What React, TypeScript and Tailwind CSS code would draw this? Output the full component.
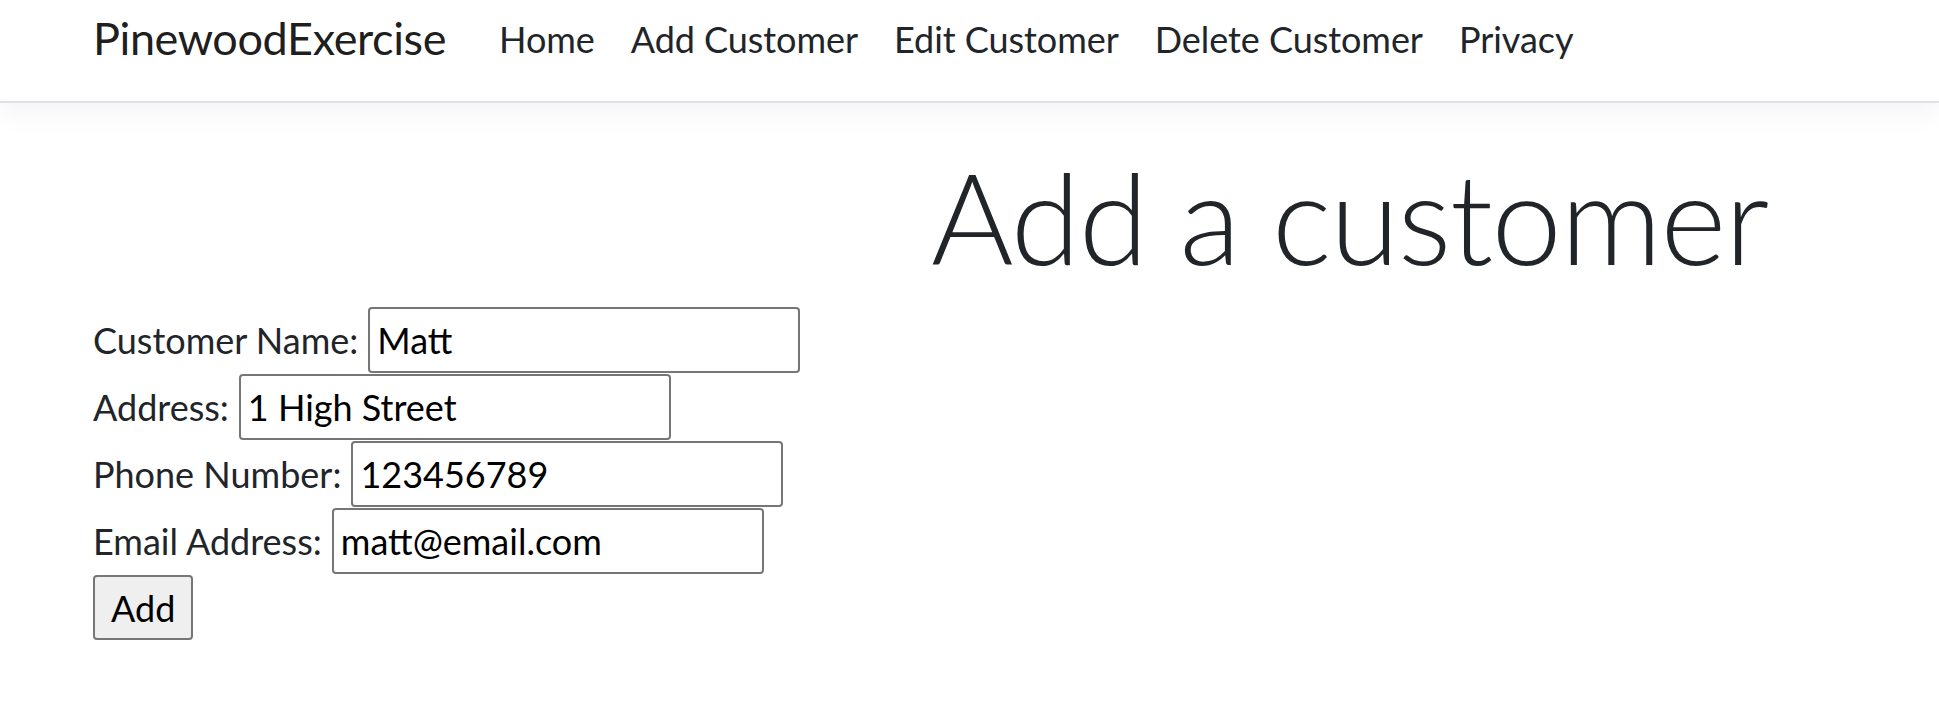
const navLinks = ["Home", "Add Customer", "Edit Customer", "Delete Customer", "Privacy"];

const fields = [
  { label: "Customer Name:", value: "Matt" },
  { label: "Address:", value: "1 High Street" },
  { label: "Phone Number:", value: "123456789" },
  { label: "Email Address:", value: "matt@email.com" },
];

export default function App() {
  return (
    <div className="min-h-[726px] bg-white text-[#212529] font-['Lato',sans-serif]">
      <header className="h-[103px] border-b-2 border-[#dee2e6] bg-white shadow-[0_9px_27px_rgba(0,0,0,0.05)]">
        <nav className="flex items-center pl-[93px] pt-[5px]">
          <a className="text-[45px] leading-[1.5] tracking-[-0.4px] text-black/90 mr-[35px]">PinewoodExercise</a>
          <ul className="flex items-center">
            {navLinks.map((link) => (
              <li key={link}>
                <a className="block px-[18px] text-[36px] leading-[1.5] tracking-[-0.05px] text-[#212529]">{link}</a>
              </li>
            ))}
          </ul>
        </nav>
      </header>

      <main className="pl-[93px]">
        <h1 className="pl-[838px] pt-[38px] mb-[15px] text-[126px] leading-[1.2] tracking-[-1.4px] font-light">
          Add a customer
        </h1>

        <form className="flex flex-col gap-[1px] text-[36px] leading-[1.5]">
          {fields.map((field) => (
            <div key={field.label} className="flex items-center h-[66px]">
              <label>{field.label}</label>
              <input
                defaultValue={field.value}
                className="ml-[10px] w-[432px] h-[66px] px-[7px] border-2 border-[#767676] rounded-[4px] text-black outline-none"
              />
            </div>
          ))}
          <div>
            <button
              type="button"
              className="h-[65px] px-[16px] bg-[#efefef] border-2 border-[#767676] rounded-[4px] text-black"
            >
              Add
            </button>
          </div>
        </form>
      </main>
    </div>
  );
}
